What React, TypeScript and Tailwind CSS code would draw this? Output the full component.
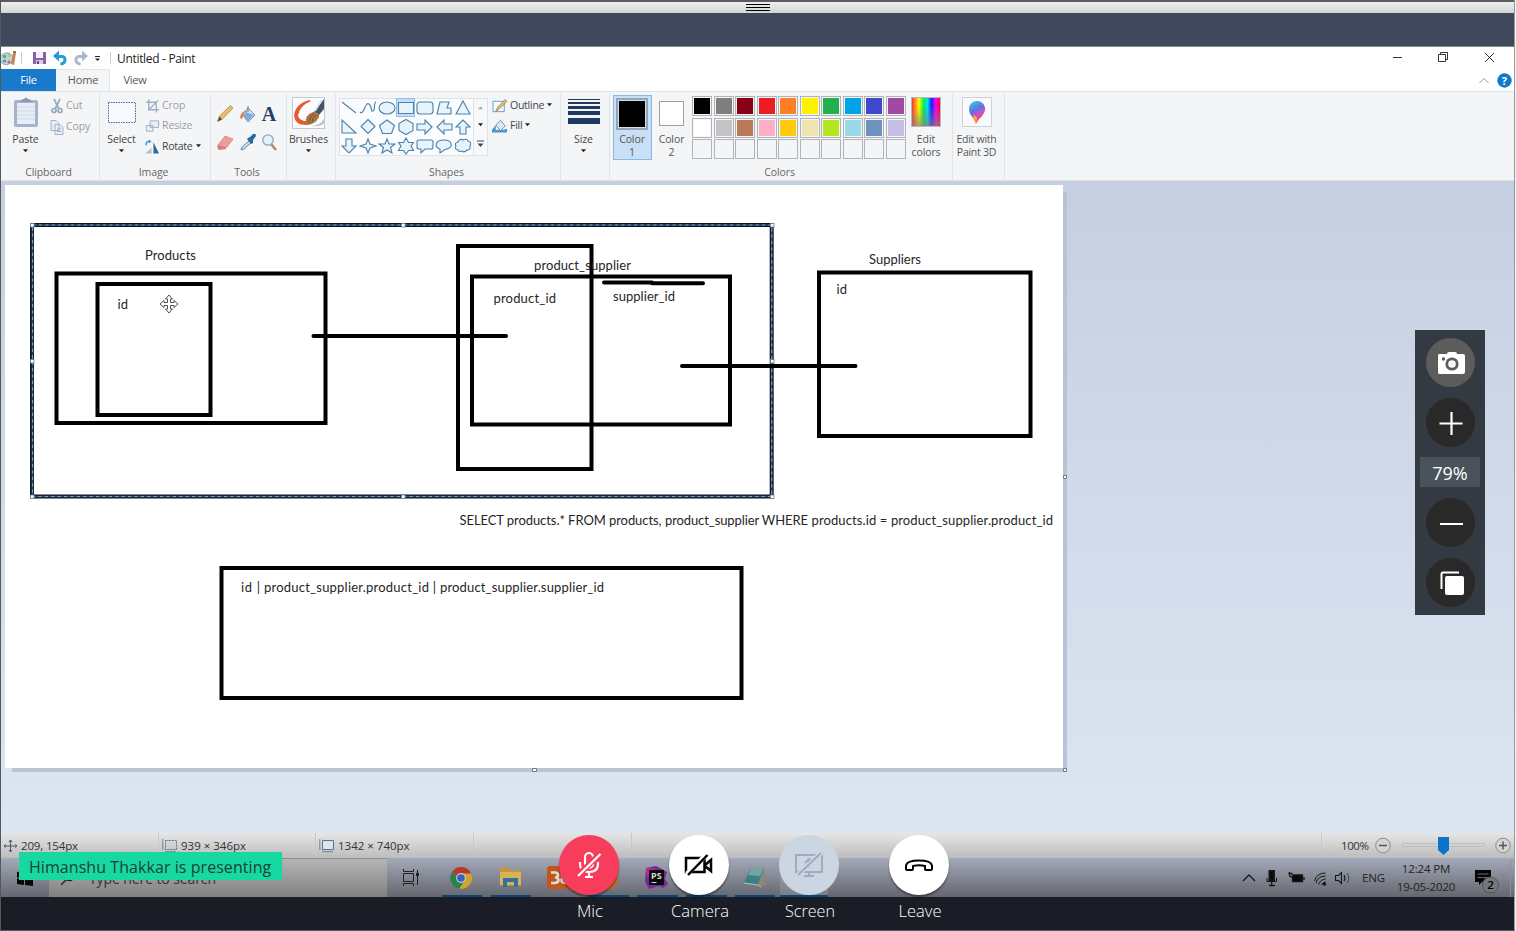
import React from "react";

type Kids = { children?: React.ReactNode };

const OPEN = "font-['Open_Sans','Noto_Sans',sans-serif]";

function Caret({ className = "" }: { className?: string }) {
  return (
    <svg className={className} width="5" height="4" viewBox="0 0 5 4">
      <path d="M0 .3h5L2.500 3.3z" fill="#222" />
    </svg>
  );
}

function Group({ label, width, children }: Kids & { label?: string; width: string }) {
  return (
    <div className={`flex h-[86px] shrink-0 flex-col border-r border-[#e1e3e6] ${width}`}>
      <div className="flex h-[71px] w-full">{children}</div>
      <div className="pr-[3px] text-center leading-[14px] text-[#666]">{label}</div>
    </div>
  );
}

function Big({ label, icon, width }: { label: string; icon: React.ReactNode; width: string }) {
  return (
    <div className={`flex shrink-0 flex-col items-center ${width}`}>
      <div className="flex h-[38px] items-center">{icon}</div>
      <span className="leading-[14px] text-[#444]">{label}</span>
      <Caret className="mt-[3px]" />
    </div>
  );
}

function Small({ icon, label, dark, caret }: { icon: React.ReactNode; label: string; dark?: boolean; caret?: boolean }) {
  return (
    <div className={`flex h-[20px] items-center gap-[2px] ${dark ? "text-[#444]" : "text-[#9a9da3]"}`}>
      {icon}
      <span className={dark ? "tracking-[-0.25px]" : "tracking-[-0.1px]"}>{label}</span>
      {caret && <Caret className="mb-[2px] ml-px" />}
    </div>
  );
}

function TitleIcons() {
  return (
    <svg width="112" height="22" viewBox="0 0 112 22">
      <path d="M-1 10q3-5 9-4l4 3-1 6q-6 5-10 1-3-3-2-6z" fill="#bdd5dc" stroke="#91a9ad" />
      <circle cx="3.500" cy="9.500" r="1.700" fill="#56a579" /><circle cx="8" cy="8.500" r="1.500" fill="#d3b94f" />
      <circle cx="3.500" cy="14" r="1.500" fill="#5289bf" /><circle cx="8" cy="15" r="1.600" fill="#d7654d" />
      <path d="m12 6-2 11 3 1 2-12z" fill="#bd8959" />
      <path d="M12 6V4h3v2z" fill="#9e7148" />
      <path d="M20.500 5v12M109.500 5v12" stroke="#ccc" />
      <path d="M32 5h13v12H32z" fill="#8660ac" /><path d="M35 5h7v6h-7z" fill="#f4f0f8" /><path d="M35 13h7v4h-7z" fill="#d9cce5" /><path d="M36 14h2v3h-2z" fill="#65438a" />
      <path d="M56 9.500h4q4-.5 4 3.300T59.500 17" fill="none" stroke="#249cdb" strokeWidth="3" />
      <path d="m52 9 6-5.500v11z" fill="#249cdb" />
      <path d="M82 9.500h-3q-4-.5-4 3.300T79.500 17" fill="none" stroke="#adb8cb" strokeWidth="3" />
      <path d="m87 9-6-5.500v11z" fill="#adb8cb" />
      <path d="M94 9.500h5" stroke="#222" /><path d="M94 11.500h5L96.500 14z" fill="#222" />
    </svg>
  );
}

function ToolIcons() {
  return (
    <svg width="75" height="71" viewBox="211 94 75 71">
      <path d="m217.500 121.500 2-5.500 11-10.500 2.500 2.500-10.500 11z" fill="#e9bd65" stroke="#a78b59" strokeWidth=".8" />
      <path d="m217.500 121.500 2-5 2.500 3z" fill="#574b40" />
      <path d="m242 114 6-6 7 7-7 7z" fill="#d8e6f2" stroke="#7790a8" />
      <path d="m243 115 3-3 8 3-6 6z" fill="#79add6" />
      <path d="M240 118q1-8 8-7l-4 2-2 6z" fill="#e2764c" /><path d="M248 112v-6" stroke="#607489" />
      <text x="269" y="120.500" textAnchor="middle" className="fill-[#283f62] font-['Liberation_Serif',serif] text-[20px] font-bold">A</text>
      <path d="m218 145 7-9 8 3-6 8-8 2.500q-2-2-1-4.500z" fill="#ee9d9b" stroke="#cf7c7c" strokeWidth=".7" /><path d="m218 145 8 2v2l-7 1q-2-2-1-5z" fill="#d77f7e" />
      <path d="m241 150 1-3 8-7 2 2-8 7z" fill="#c4dcea" stroke="#688ca5" />
      <path d="m248 138 2-1 3-3q3-1 3 2l-3 4v3l-2 1-4-5z" fill="#256aa0" />
      <path d="m271 144 5 6" stroke="#ad8a68" strokeWidth="2.500" /><circle cx="268" cy="140" r="5.200" fill="#e4f2fc" stroke="#94a5b4" strokeWidth="1.300" />
    </svg>
  );
}

const shapePaths = [
  "M2 4 16 15",
  "M1 14C5 18 6 3 10 6s1 8 4 7 0-8 3-9",
  "M1 10a8 6 0 1 0 16 0a8 6 0 1 0-16 0z",
  "M1.500 4.500h15v11h-15z",
  "M4 4h10q3 0 3 3v6q0 3-3 3H4q-3 0-3-3V7q0-3 3-3z",
  "M5 4h9l-2 6h4v6H2z",
  "M9 3l7 13H2z",
  "M2 3v13h14z",
  "M9 2.500l7 7-7 7-7-7z",
  "M9 3l7.500 5.500-3 8h-9l-3-8z",
  "M9 2.500l7 4v7l-7 4-7-4v-7z",
  "M1 7h8V3l7 7-7 7v-4H1z",
  "M17 7H9V3l-7 7 7 7v-4h8z",
  "M6 17V10H2l7-7 7 7h-4v7z",
  "M6 3v7H2l7 7 7-7h-4V3z",
  "M9 3l2 5 6 2-6 2-2 5-2-5-6-2 6-2z",
  "M9 3l2 5h6l-4.500 3.500L14 17l-5-3-5 3 1.500-5.500L1 8h6z",
  "M9 2l2.500 4.500h5L14 10l2.500 4.500h-5L9 18l-2.500-3.500h-5L4 10 1.500 6.500h5z",
  "M3 4h12q2 0 2 2v5q0 2-2 2H9l-4 4v-4H3q-2 0-2-2V6q0-2 2-2z",
  "M5 13C-1 11 0 4 9 4s10 8 1 9.500l-5 3.500z",
  "M4 6q2-4 5-2 4-2 5 1 4 1 2 5 1 4-3 4-3 3-5 1-4 1-4-1-4-1-2-4-2-3 2-4z",
];

function ShapeGallery() {
  return (
    <div className="flex h-[58px] w-[149px] border border-[#dfe3e9] bg-[#fafcfe]">
      <div className="-ml-px -mt-px grid w-[134px] grid-cols-7 grid-rows-3">
        {shapePaths.map((d, i) => (
          <div key={i} className={`flex h-[19px] w-[19px] items-center justify-center ${i === 3 ? "bg-[#c5dcf5] ring-1 ring-inset ring-[#8ebdea]" : ""}`}>
            <svg width="18" height="20" viewBox="0 0 18 20" className="shrink-0">
              <path d={d} fill={i < 2 ? "none" : "#e8f4fb"} stroke="#4b81ab" strokeWidth="1.100" />
            </svg>
          </div>
        ))}
      </div>
      <div className="flex flex-1 flex-col items-center justify-around border-l border-[#e0e4ea] bg-[#f6f8fa]">
        <svg width="5" height="4" viewBox="0 0 5 4"><path d="M0 3.300h5L2.500.3z" fill="#a8abb2" /></svg>
        <Caret />
        <svg width="7" height="8" viewBox="0 0 7 8"><path d="M0 1h7" stroke="#444" /><path d="M.5 3.500h6L3.500 7z" fill="#444" /></svg>
      </div>
    </div>
  );
}

const palette: string[] = [
  "#000000", "#7f7f7f", "#880015", "#ed1c24", "#ff7f27", "#fff200", "#22b14c", "#00a2e8", "#3f48cc", "#a349a4",
  "#ffffff", "#c3c3c3", "#b97a57", "#ffaec9", "#ffc90e", "#efe4b0", "#b5e61d", "#99d9ea", "#7092be", "#c8bfe7",
  "", "", "", "", "", "", "", "", "", "",
];

function Ribbon() {
  return (
    <div className="flex h-[90px] border-y border-[#dfe2e6] bg-[#f4f5f7] pt-[2px] text-[10.5px] tracking-[-0.1px]">
      <Group label="Clipboard" width="w-[99px]">
        <Big width="w-[49px]" label="Paste" icon={
          <svg width="26" height="32" viewBox="0 0 26 32">
            <rect x="1" y="3" width="24" height="27" rx="2" fill="#a5b4cc" /><path d="M4 6h18v21H4z" fill="#e6edf6" />
            <path d="M7 5q1-3 4-3 2-3 4 0 3 0 4 3z" fill="#8d9ab0" /><path d="M4 10h18M4 14h18M4 18h18M4 22h18" stroke="#cfdae9" />
          </svg>} />
        <div className="flex flex-col gap-[0.5px] pt-[2px]">
          <Small label="Cut" icon={<svg width="14" height="16" viewBox="0 0 14 16" fill="none" stroke="#9aa9c1" strokeWidth="1.700"><path d="m4 1 5 10M10 1 5 11" /><circle cx="4" cy="12.500" r="2" /><circle cx="10" cy="12.500" r="2" /></svg>} />
          <Small label="Copy" icon={<svg width="14" height="16" viewBox="0 0 14 16" fill="#e8eef6" stroke="#a4b3ca"><path d="M1 1.500h5l3 3v7H1zM5 5.500h5l3 3v7H5z" /><path d="M7 10h4M7 12.500h4" /></svg>} />
        </div>
      </Group>
      <Group label="Image" width="w-[111px]">
        <Big width="w-[43px]" label="Select" icon={<svg width="28" height="22" viewBox="0 0 28 22"><rect x=".5" y=".5" width="27" height="20" fill="#f7fbff" stroke="#456d98" strokeDasharray="1.500 1" /></svg>} />
        <div className="ml-[2px] flex flex-col gap-[0.3px] pt-[2px]">
          <Small label="Crop" icon={<svg width="15" height="16" viewBox="0 0 16 16" fill="none" stroke="#9daec7" strokeWidth="1.400"><path d="M4 1v11h11M1 4h11v11M14 2 4 12" /></svg>} />
          <Small label="Resize" icon={<svg width="15" height="14" viewBox="0 0 16 14" fill="#e8eef6" stroke="#9daec7"><path d="M5.500 1.500h9v7h-9zM1.500 6.500h7v6h-7z" /></svg>} />
          <Small dark caret label="Rotate" icon={<svg width="15" height="16" viewBox="0 0 16 16"><path d="M9 15V3l6 12z" fill="#2c6fa6" /><path d="M7 15V9l-7 6z" fill="#b8bec5" /><path d="M1 6q0-4 4-4" fill="none" stroke="#2f8fd6" strokeWidth="1.500" /><path d="M4 0v4l3-2z" fill="#2f8fd6" /></svg>} />
        </div>
      </Group>
      <Group label="Tools" width="w-[76px]"><ToolIcons /></Group>
      <Group width="w-[49px]">
        <Big width="w-[43px]" label="Brushes" icon={
          <svg width="33" height="32" viewBox="0 0 33 32">
            <rect x=".5" y=".5" width="32" height="31" fill="#fbfcfd" stroke="#c3c8ce" />
            <path d="M17 3Q3 7 2 19q1 9 12 9 4-1 3-4-9 1-11-5Q7 9 19 4z" fill="#e65a2f" />
            <path d="M22 15 32 2v10l-5 6z" fill="#43556a" /><path d="m23 14 7-11" stroke="#d7dfe7" strokeWidth="1.500" /><path d="M14 28q-2-10 7-13 7 0 6 5-4 8-13 8z" fill="#a8743f" /><path d="M17 26q0-6 5-9M20 25q0-4 4-7" stroke="#7a4f28" fill="none" /><path d="M19 29q9 0 13-7v4q-4 4-13 3z" fill="#b9bec3" />
          </svg>} />
      </Group>
      <Group label="Shapes" width="w-[225px]">
        <div className="ml-[3px] mt-[4px]"><ShapeGallery /></div>
        <div className="ml-1 flex flex-col pt-[2px]">
          <Small dark caret label="Outline" icon={<svg width="16" height="16" viewBox="0 0 17 16"><path d="M1 3h12v11H1z" fill="#f4faff" stroke="#5e9ccc" /><path d="m4 14 2-5 8-8 2 2-8 8z" fill="#e4b868" stroke="#8e754b" strokeWidth=".7" /></svg>} />
          <Small dark caret label="Fill" icon={<svg width="16" height="16" viewBox="0 0 17 16"><path d="m4 7 5-5 5 6-5 5z" fill="#d9eaf6" stroke="#6b8eae" /><path d="M0 15v-3l4-5v5q6 1 12-1v4z" fill="#4f96cf" /></svg>} />
        </div>
      </Group>
      <Group width="w-[49px]">
        <Big width="w-[45px]" label="Size" icon={<svg width="32" height="30" viewBox="0 0 32 30" fill="#203a5f"><path d="M0 1h32v1H0zM0 4h32v2H0zM0 8h32v3H0zM0 13h32v4H0zM0 20h32v6H0z" /></svg>} />
      </Group>
      <Group label="Colors" width="w-[343px]">
        <div className="ml-[3px] mt-px flex h-[65px] w-[39px] flex-col items-center border border-[#86b8e8] bg-[#c9dff5] pr-px pt-[2px] text-center leading-[13px] text-[#555]">
          <div className="mb-[3px] h-[32px] w-[32px] shrink-0 border-2 border-[#96a5b5] bg-black ring-1 ring-inset ring-[#cfe0f0]" />
          Color<br />1
        </div>
        <div className="flex w-[40px] flex-col items-center pr-px pt-[7px] text-center leading-[13px] text-[#555]">
          <div className="mb-[7px] h-[25px] w-[25px] shrink-0 border border-[#a0a0a0] bg-white" />
          Color<br />2
        </div>
        <div className="mt-[2px] grid h-[63px] w-[214px] shrink-0 grid-cols-10 grid-rows-3 gap-[1.5px]">
          {palette.map((c, i) => (
            <div key={i} className="border border-[#b0b3b8] p-px">
              <div className="h-full w-full" style={{ backgroundColor: c || "#f4f5f7" }} />
            </div>
          ))}
        </div>
        <div className="flex w-[40px] flex-col items-center pt-[3px] text-center leading-[13px] text-[#555]">
          <div className="mb-[6px] h-[30px] w-[30px] shrink-0 border border-[#c8b0c0] bg-[linear-gradient(0deg,#808080b0,#80808000_70%),linear-gradient(90deg,#f33,#ff0_25%,#0e4_42%,#0df_55%,#12f_70%,#f0e_85%,#f03)]" />
          Edit<br />colors
        </div>
      </Group>
      <Group width="w-[52px]">
        <div className="flex w-full flex-col items-center whitespace-nowrap pt-[3px] pr-[4px] text-center leading-[13px] tracking-[-0.25px] text-[#555]">
          <div className="mb-[6px] flex h-[30px] w-[30px] shrink-0 items-center justify-center border border-[#cdd0d5] bg-[#f8fafc]">
            <svg width="20" height="26" viewBox="0 0 20 26">
              <defs><linearGradient id="pin" x1=".2" y1="0" x2=".6" y2="1"><stop stopColor="#37cbe8" /><stop offset=".4" stopColor="#5f73df" /><stop offset=".65" stopColor="#d152b8" /><stop offset=".85" stopColor="#ee4968" /><stop offset="1" stopColor="#ffb63e" /></linearGradient></defs>
              <path d="M10 2a8 8 0 0 1 7 12q-2 4-5 6l-3 5-2-5Q2 15 2 10a8 8 0 0 1 8-8z" fill="url(#pin)" />
              <path d="M7 16q3 1 3 4l-1 5-3-6z" fill="#f6a44a" />
            </svg>
          </div>
          Edit with<br />Paint 3D
        </div>
      </Group>
    </div>
  );
}

function Diagram() {
  return (
    <svg width="1072" height="652" viewBox="0 181 1072 652" className="font-[Lato,sans-serif] text-[13px]">
      <path d="M12 770H1065V192" fill="none" stroke="#b8c3d6" strokeWidth="4" />
      <path d="M5 185h1058v583H5z" fill="#fff" />
      <g fill="none" stroke="#000" strokeWidth="4">
        <path d="M32 225H771.700V496.500H32z" stroke="#0d1722" />
        <path d="M32.500 225H771.700V496.500H32.500z" stroke="#1c4f80" strokeWidth="1.500" />
        <path d="M32.500 225H771.700V496.500H32.500z" stroke="#9a9a9a" strokeWidth="1.200" strokeDasharray="3.200 3.200" />
        <path d="M56.500 273.500H325.500V423H56.500zM97.500 284H210.500V415H97.500zM458 246H591.500V469H458zM472 276.500H730V424.500H472zM819 272.500H1030.500V436H819zM221.500 568H741.500V698H221.500z" />
        <path d="M313.500 336H506M682 366H855.500M604 282.500H652M652 283.300H703" strokeLinecap="round" />
      </g>
      <g fill="#fff" stroke="#6682a0" strokeWidth=".8">
        {[[32, 225], [403, 225], [772, 225], [32, 361], [772, 361], [32, 496.500], [403, 496.500], [772, 496.500]].map(([x, y]) => <rect key={`${x}-${y}`} x={x - 1.500} y={y - 1.500} width="3.500" height="3.500" />)}
      </g>
      <g fill="#fff" stroke="#777" strokeWidth="1"><path d="M1063.500 475.500h3v3h-3zM1063.500 768.500h3v3h-3zM532.500 768.500h4v3h-4z" /></g>
      <g fill="#262626">
        <text x="145" y="260" textLength="51">Products</text>
        <text x="117.500" y="309" textLength="10.500">id</text>
        <text x="534" y="270" textLength="97">product_supplier</text>
        <text x="493.500" y="303" textLength="62.500">product_id</text>
        <text x="613" y="300.500" textLength="62">supplier_id</text>
        <text x="869" y="264" textLength="52">Suppliers</text>
        <text x="836.500" y="294" textLength="10.500">id</text>
        <text y="525">
          <tspan x="459.500" textLength="202">SELECT products.* FROM products,</tspan>
          <tspan x="665" textLength="143">product_supplier WHERE</tspan>
          <tspan x="811.500" textLength="241.500">products.id = product_supplier.product_id</tspan>
        </text>
        <text y="592">
          <tspan x="241" textLength="19">id |</tspan>
          <tspan x="264" textLength="172">product_supplier.product_id |</tspan>
          <tspan x="440" textLength="164">product_supplier.supplier_id</tspan>
        </text>
      </g>
      <path d="m169 295 3.500 4h-2v3.500h3.500v-2l4 3.500-4 3.500v-2h-3.500v3.500h2l-3.500 4-3.500-4h2v-3.500H164v2l-4-3.500 4-3.500v2h3.500V299h-2z" fill="#fff" stroke="#4c4f58" strokeWidth="1" />
    </svg>
  );
}

function StatusCell({ icon, label, width }: { icon?: React.ReactNode; label?: string; width: string }) {
  return (
    <div className={`flex items-center gap-[4px] border-r border-[#c8c8cc] pl-[3px] pt-px ${width}`}>
      {icon}
      <span>{label}</span>
    </div>
  );
}

function StatusBar() {
  return (
    <div className="flex h-[25px] bg-gradient-to-b from-[#e6e6e6] to-[#bcbcbc] text-[11.5px] text-[#333]">
      <StatusCell width="w-[158px] tracking-[-0.15px]" label="209, 154px" icon={<svg width="13" height="14" viewBox="0 0 13 14" fill="none" stroke="#465a70"><path d="M6.500 1v12M0 7h13M5 3l1.500-2L8 3M5 11l1.500 2L8 11M2 5.500 0 7l2 1.500M11 5.500 13 7l-2 1.500" /></svg>} />
      <StatusCell width="w-[157px]" label="939 × 346px" icon={<svg width="15" height="14" viewBox="0 0 15 14" fill="none" stroke="#5c7188"><path d="M3.500 1.500h11v9h-11z" strokeDasharray="2 1" /><path d="M.8 0v11M3 12.700h11" strokeWidth=".8" /></svg>} />
      <StatusCell width="w-[158px]" label="1342 × 740px" icon={<svg width="15" height="14" viewBox="0 0 15 14" fill="none" stroke="#5c7188"><path d="M3.500 1.500h11v9h-11z" fill="#d9e6ee" /><path d="M.8 0v11M3 12.700h11" strokeWidth=".8" /></svg>} />
      <StatusCell width="w-[158px]" />
      <div className="flex-1 border-r border-[#c8c8cc]" />
      <div className="flex w-[192px] items-center pl-[19px]">
        <span className="w-[33px] pt-px tracking-[-0.4px]">100%</span>
        <svg width="140" height="25" viewBox="0 0 140 25">
          <g fill="#d4d4d4" stroke="#8c8c8c"><circle cx="9" cy="12.500" r="7.300" /><circle cx="129" cy="12.500" r="7.300" /></g>
          <path d="M5 12.500h8M125 12.500h8M129 8.500v8" stroke="#555" strokeWidth="1.500" />
          <path d="M28.500 10.500h82v3h-82z" fill="#d0d2d2" stroke="#bcc0c0" />
          <path d="M64 4h11v13l-5.500 5-5.500-5z" fill="#0b74cc" />
        </svg>
      </div>
    </div>
  );
}

function Taskbar() {
  return (
    <div className="flex h-[39px] items-stretch bg-gradient-to-b from-[#a4aaba] to-[#65676f] text-[#222]">
      <div className="flex w-[48px] items-center justify-center">
        <svg width="16" height="16" viewBox="0 0 16 16"><path d="M0 2l7-1v6.500H0zM8 1l8-1v7.500H8zM0 8.500h7V15l-7-1zM8 8.500h8V16l-8-1z" fill="#060606" /></svg>
      </div>
      <div className="flex w-[338px] items-center gap-[14px] border-t border-[#8d8d8d] bg-gradient-to-b from-[#b5b5b5] to-[#818181] pl-[12px] text-[14px] tracking-[-0.1px] text-[#333]">
        <svg width="14" height="15" viewBox="0 0 14 15" fill="none" stroke="#222" strokeWidth="1.300"><circle cx="8.500" cy="5" r="4.500" /><path d="M5.500 8.500 0 14" /></svg>
        Type here to search
      </div>
      <svg width="445" height="39" viewBox="387 858 445 39">
        <path d="M780 858h48v37h-48z" fill="#bbb" opacity=".25" />
        <g fill="none" stroke="#222"><path d="M403.500 873.500h10v8h-10zM403.500 869v2.500h10V869M403.500 886v-2.500h10v2.500M417.500 870v15" /></g><path d="M416 873h3v3h-3z" fill="#222" />
        <path d="M442 895h40v2h-40zM491 895h40v2h-40zM588 895h41v2h-41zM637 895h41v2h-41zM686 895h41v2h-41zM735 895h40v2h-40zM780 895h48v2h-48z" fill="#08477c" />
        <path d="M461 878 451.700 872.500A10.700 10.700 0 0 1 471 873.500z" fill="#b9382c" />
        <path d="M461 878 451.600 872.700A10.700 10.700 0 0 0 459 888.500L465 880z" fill="#27834a" />
        <path d="M461 873.500h10A10.700 10.700 0 0 1 459.500 888.600L465 880z" fill="#cfa62b" />
        <circle cx="461" cy="878" r="4.900" fill="#ccc" /><circle cx="461" cy="878" r="3.800" fill="#2f63bd" />
        <path d="M500 869q0-1.500 1.500-1.500h7l2 3H521v15h-21z" fill="#c49a38" /><path d="M500 872h21v13h-21z" fill="#d7b353" /><path d="M503 878h15v9h-4v-5h-7v5h-4z" fill="#32719d" />
        <rect x="547" y="866" width="24" height="23" rx="3" fill="#c2571a" /><path d="M551 872.500h4q3 0 3 2.500t-3 2.500q3.500 0 3.500 2.500t-3.500 3H551M569 872.500h-4q-3 0-3 2.500t3 2.500q-3.500 0-3.500 2.500t3.500 3h4" fill="none" stroke="#ddd" strokeWidth="2.600" />
        <circle cx="607" cy="879" r="11" fill="#c36d23" />
        <path d="m646 868 10-2 6 3 5 3-2 7 3 5-5 4-4-2-10 3-4-7z" fill="#76299c" /><path d="m646 868 8 1-7 8z" fill="#c13182" /><path d="M649 870h15v15h-15z" fill="#0a0a0a" />
        <text x="651" y="878.500" className="fill-[#ddd] text-[9px] font-bold">PS</text><path d="M651.500 882.500h5" stroke="#ddd" />
        <path d="m744 883 6-14 14-2-6 18z" fill="#3c8087" /><path d="m748 875 3-7 13-1-4 9z" fill="#74a5a5" /><path d="m764 867 2 17-5 3-3-2z" fill="#8b8675" /><path d="m744 883 14 2 3 2" stroke="#b8c0ba" fill="none" />
      </svg>
      <div className="flex-1" />
      <svg width="125" height="39" viewBox="1237 858 125 39" fill="none" stroke="#161616" strokeWidth="1.300">
        <path d="m1243 881 6-6 6 6" />
        <path d="M1269.500 871h4.500v9.500h-4.500z" fill="#080808" strokeWidth="2" /><path d="M1267 878v3.500h9.500V878" strokeWidth="1" /><path d="M1271.700 882v3M1269 885.500h6" />
        <path d="M1292.500 875h10v6.500h-10z" fill="#080808" /><path d="M1304 877v3M1288.500 873.500h4M1289.500 872v3q0 2 2.500 2" />
        <path d="M1314.500 881q2-8 11-8M1316 883q2-7 9.500-7M1318.500 884.500q2-5 7-5.500M1321.500 885q1-2.500 4-3" strokeWidth="1" /><circle cx="1324.500" cy="884" r="1" fill="#111" />
        <path d="M1335.500 875.500h3l3-3v11l-3-3h-3zM1344 875q2 3 0 6" strokeWidth="1.100" /><path d="M1347 873q3.500 5 0 10" stroke="#444" strokeWidth="1" />
      </svg>
      <div className="flex w-[24px] items-center text-[11.5px] tracking-[-0.2px]">ENG</div>
      <div className="flex w-[78px] flex-col items-center pl-[2px] pt-[2px] text-[11.5px] leading-[18px] tracking-[-0.15px]"><span>12:24 PM</span><span>19-05-2020</span></div>
      <svg width="50" height="39" viewBox="0 0 50 39">
        <path d="M11 12h16v12H18l-3 3v-3h-4z" fill="#050505" /><path d="M13.500 16h11M13.500 19.500h11" stroke="#6b6b70" />
        <circle cx="26.500" cy="27" r="8" fill="#77787d" stroke="#55565b" /><text x="23.200" y="31" className="fill-black text-[11.5px] font-semibold">2</text><path d="M46.500 2v37" stroke="#8c8f97" />
      </svg>
    </div>
  );
}

function CallButton({ label, tone, width, children }: Kids & { label: string; tone: string; width: string }) {
  return (
    <div className="flex w-[110px] flex-col items-center">
      <div className={`flex h-[60px] w-[60px] items-center justify-center rounded-full ${tone}`}>{children}</div>
      <svg width="70" height="24" viewBox="0 0 70 24" className="mt-[3px] fill-white text-[16px] font-light">
        <text x="36" y="19" textAnchor="middle" textLength={width} lengthAdjust="spacingAndGlyphs">{label}</text>
      </svg>
    </div>
  );
}

function CallControls() {
  return (
    <div className="absolute left-[534px] top-[835px] flex">
      <CallButton label="Mic" width="26" tone="bg-[#f83d5c] shadow-[0_2px_2px_#0006]">
        <svg width="26" height="30" viewBox="0 0 26 30" fill="none" stroke="#fff" strokeWidth="2.200">
          <rect x="9" y="3" width="8" height="15" rx="4" /><path d="M4 12v2q0 8 9 8t9-8v-2M13 22v4M9 27h8" /><path d="M24 3.500 2 25.500" stroke="#f83d5c" strokeWidth="6" /><path d="M24.500 4 2 26" />
        </svg>
      </CallButton>
      <CallButton label="Camera" width="58" tone="bg-white shadow-[0_2px_2px_#0006]">
        <svg width="32" height="26" viewBox="0 0 32 26" fill="none" stroke="#000" strokeWidth="2.500">
          <path d="M3 6h18.500v14H3zM22 13l6-5v11l-6-5" /><path d="M24 2 4 22" stroke="#fff" strokeWidth="5" /><path d="M24.500 3 5 23" />
        </svg>
      </CallButton>
      <CallButton label="Screen" width="50" tone="bg-[#cbd6e2]">
        <svg width="30" height="28" viewBox="0 0 30 28" fill="none" stroke="#9eacc1" strokeWidth="2">
          <path d="M2 4h26v17H2zM15 21v4M10 25h10M11 12l4-4 4 4M15 9v8" /><path d="M27 2 4 24" stroke="#cbd6e2" strokeWidth="4.500" /><path d="M27 2 4 24" />
        </svg>
      </CallButton>
      <CallButton label="Leave" width="43" tone="bg-white shadow-[0_2px_2px_#0006]">
        <svg width="30" height="16" viewBox="0 0 30 16" fill="none" stroke="#000" strokeWidth="2"><path d="M2 8.500Q3 3.500 15 3.500t13 5V12q0 1-1 1h-5q-1 0-1-1V9Q15 7.500 9 9v3q0 1-1 1H3q-1 0-1-1z" /></svg>
      </CallButton>
    </div>
  );
}

function Round({ light, children }: Kids & { light?: boolean }) {
  return <div className={`flex h-[49px] w-[49px] items-center justify-center rounded-full ${light ? "bg-[#5c5c5c]" : "bg-[#292929]"}`}>{children}</div>;
}

function ZoomPanel() {
  return (
    <div className="absolute left-[1415px] top-[330px] flex h-[285px] w-[70px] flex-col items-center bg-[#343a42] pl-px pt-[8px]">
      <Round light>
        <svg width="28" height="24" viewBox="0 0 28 24"><path d="M2 3h8q0-2 2-2h6q2 0 2 2h6q2 0 2 2v16q0 2-2 2H2q-1 0-1-2V5q0-2 1-2z" fill="#fff" /><circle cx="15" cy="13" r="5.200" fill="none" stroke="#5c5c5c" strokeWidth="2.800" /><circle cx="6.500" cy="8" r="1.700" fill="#5c5c5c" /></svg>
      </Round>
      <div className="mt-[11px]"><Round><svg width="24" height="24" viewBox="0 0 24 24" stroke="#fff" strokeWidth="2.200"><path d="M.5 12.500h23M12.500 1v23" /></svg></Round></div>
      <div className="-ml-px mt-[10px] flex h-[30px] w-[60px] items-center justify-center bg-[#4a525d] pt-[3px] text-[18px] text-white">79%</div>
      <div className="mt-[11px]"><Round><svg width="24" height="24" viewBox="0 0 24 24"><path d="M1 13h23" stroke="#fff" strokeWidth="2" /></svg></Round></div>
      <div className="mt-[11px]"><Round><svg width="26" height="26" viewBox="0 0 26 26"><path d="M3.500 19V4q0-1.500 1.500-1.500h16" fill="none" stroke="#fff" strokeWidth="2" /><rect x="7" y="6" width="19" height="19" rx="2" fill="#fff" /></svg></Round></div>
    </div>
  );
}

export default function App() {
  return (
    <div className={`relative flex h-[931px] w-[1516px] overflow-hidden bg-[#f4f4f4] ${OPEN}`}>
      <div className="flex w-[1515px] flex-col border-b border-l border-r border-b-[#55566a] border-l-[#55585a] border-r-[#989898]">
        <div className="h-[2px] bg-[#5a5d5a]" />
        <div className="flex h-[11px] flex-col items-center gap-[2px] bg-gradient-to-b from-[#efefef] to-[#d5d5d5] pt-[2px]">
          <div className="h-px w-[24px] bg-black" />
          <div className="h-px w-[24px] bg-black" />
          <div className="h-px w-[24px] bg-black" />
        </div>
        <div className="h-[34px] border-b border-[#888] bg-[#40485b]" />
        <div className="flex h-[22px] items-center bg-white">
          <TitleIcons />
          <span className="ml-[4px] pt-px text-[12px] tracking-[-0.32px] text-[#222]">Untitled - Paint</span>
          <div className="flex-1" />
          <svg width="123" height="22" viewBox="1391 47 123 22" fill="none" stroke="#333"><path d="M1393 57.500h9M1438.500 54.500h7v7h-7zM1440.500 54v-1.500h7v7H1446M1485 53l9 9M1494 53l-9 9" /></svg>
        </div>
        <div className="flex h-[22px] bg-white text-[11px] tracking-[-0.2px] text-[#555]">
          <div className="flex w-[55px] items-center justify-center bg-[#1979ca] pt-px text-white">File</div>
          <div className="flex w-[54px] items-center justify-center border-r border-t border-[#e2e4e7] bg-[#f4f5f7] pl-px">Home</div>
          <div className="flex w-[50px] items-center justify-center pt-px">View</div>
          <div className="flex-1" />
          <svg width="37" height="22" viewBox="1477 69 37 22"><path d="m1479.500 83 4.500-4.500 4.500 4.500" fill="none" stroke="#999" /><circle cx="1504.500" cy="80.500" r="7.200" fill="#1179cb" /><text x="1501.700" y="84.500" className="fill-white text-[11px] font-bold">?</text></svg>
        </div>
        <Ribbon />
        <div className="-ml-px flex h-[652px] border-l border-[#55585a] bg-gradient-to-b from-[#c6cfe0] to-[#dce6f2]">
          <div className="-ml-px"><Diagram /></div>
        </div>
        <StatusBar />
        <Taskbar />
        <div className="flex-1 bg-[#1a1d26]" />
      </div>
      <div className="absolute left-[19px] top-[852px] flex h-[28px] w-[263px] items-center bg-[#17d8a0] pl-[10px] pt-px text-[16px] tracking-[0.06px] text-[#1c3f38]">Himanshu Thakkar is presenting</div>
      <CallControls />
      <ZoomPanel />
    </div>
  );
}
